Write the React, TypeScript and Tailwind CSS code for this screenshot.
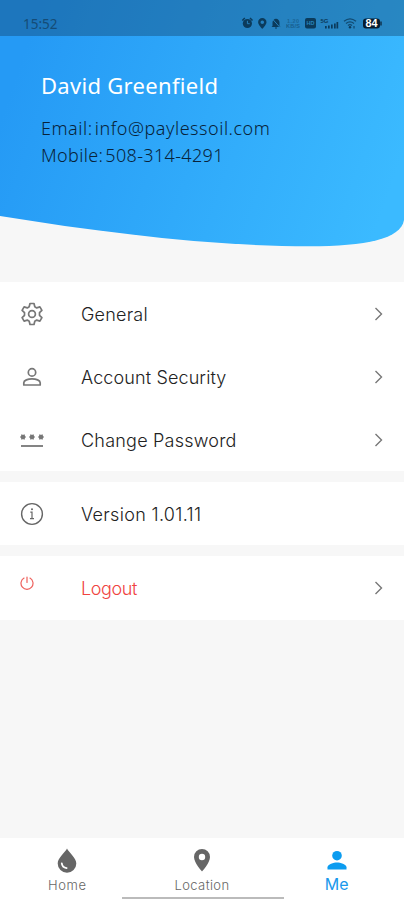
import type { ReactNode } from 'react';

interface MenuItem { label: string; icon: ReactNode; arrow?: boolean; danger?: boolean; textClass: string; }

function GearIcon() {
  return (
    <svg className="w-[24px] h-[24px]" viewBox="0 0 24 24" fill="none" stroke="#777" strokeWidth="1.7" strokeLinejoin="round">
      <path d="M10 1.500h4l.8 3.300 1.900 1.100 3.200-1 2 3.500-2.400 2.300v2.600l2.400 2.300-2 3.500-3.200-1-1.900 1.100-.8 3.300h-4l-.8-3.300-1.900-1.100-3.200 1-2-3.500 2.400-2.300v-2.600L2.100 8.400l2-3.500 3.200 1 1.900-1.100z" />
      <circle cx="12" cy="12" r="3.400" />
    </svg>
  );
}

function PersonIcon() {
  return (
    <svg className="w-[24px] h-[24px]" viewBox="0 0 24 24" fill="none" stroke="#777" strokeWidth="1.7" strokeLinejoin="round">
      <circle cx="12" cy="7.400" r="3.700" />
      <path d="M3.800 20v-2.200c0-2.500 4.200-4 8.200-4s8.200 1.500 8.200 4V20z" />
    </svg>
  );
}

function PasswordIcon() {
  return (
    <svg className="w-[24px] h-[24px]" viewBox="0 0 24 24" stroke="#777" fill="none">
      <path d="M1 18h22" strokeWidth="1.800" />
      {[3, 12, 21].map((x) => (
        <g key={x} transform={`translate(${x} 9)`}>
          <circle r="2.300" fill="#777" stroke="none" />
          <path d="M-2.900 0h5.800M-1.450-2.500l2.900 5M1.450-2.500l-2.900 5" strokeWidth="1.200" />
        </g>
      ))}
    </svg>
  );
}

function InfoIcon() {
  return (
    <svg className="w-[24px] h-[24px]" viewBox="0 0 24 24" fill="none" stroke="#666" strokeWidth="1.4">
      <circle cx="12" cy="12" r="10.400" />
      <path d="M10.300 10.200H12v6.300M10 16.600h4" strokeWidth="1.200" />
      <circle cx="12" cy="7.200" r="1" fill="#666" stroke="none" />
    </svg>
  );
}

function PowerIcon() {
  return (
    <svg className="w-[14px] h-[14px] mb-[10px]" viewBox="0 0 14 14" fill="none" stroke="#ee605c" strokeWidth="1.200" strokeLinecap="round">
      <path d="M7 1v5.500M4 2.100a6 6 0 1 0 6 0" />
    </svg>
  );
}

const groups: MenuItem[][] = [
  [
    { label: 'General', icon: <GearIcon />, arrow: true, textClass: 'tracking-[0.2px]' },
    { label: 'Account Security', icon: <PersonIcon />, arrow: true, textClass: 'tracking-[0.12px]' },
    { label: 'Change Password', icon: <PasswordIcon />, arrow: true, textClass: 'tracking-[0.22px]' },
  ],
  [{ label: 'Version 1.01.11', icon: <InfoIcon />, textClass: 'tracking-[0.32px]' }],
  [{ label: 'Logout', icon: <PowerIcon />, arrow: true, danger: true, textClass: 'tracking-[-0.4px]' }],
];

function MenuRow({ item }: { item: MenuItem }) {
  return (
    <div className="h-[63px] flex items-center pl-5 pr-5">
      <div className="w-[61px] flex-shrink-0">{item.icon}</div>
      <span className={`flex-1 pt-[2px] text-[18px] leading-6 font-light whitespace-nowrap ${item.textClass} ${item.danger ? 'text-[#f0433f]' : 'text-[#222]'}`}>{item.label}</span>
      {item.arrow && (
        <svg className="w-[10px] h-[14px]" viewBox="0 0 10 14" fill="none" stroke="#777" strokeWidth="1.400">
          <path d="M1.500 1l6 6-6 6" />
        </svg>
      )}
    </div>
  );
}

function StatusIcons() {
  return (
    <svg className="w-[142px] h-[14px]" viewBox="241 16 142 14" fill="#0b3b5c">
      <circle cx="247.400" cy="23.500" r="4.600" />
      <path d="M242.300 20.500l2.500-2.500M252.500 20.500l-2.500-2.500" stroke="#0b3b5c" strokeWidth="1.500" />
      <path d="M247.400 20.800v2.900h2.300" stroke="#2481bd" fill="none" />
      <path fillRule="evenodd" d="M262.300 18a4.200 4.200 0 0 1 4.200 4.200c0 2.500-4.200 6.600-4.200 6.600s-4.200-4.100-4.200-6.600a4.200 4.200 0 0 1 4.200-4.200zm0 2.500a1.800 1.800 0 1 0 0 3.600 1.800 1.800 0 0 0 0-3.600z" />
      <path d="M272.500 26v-3.500c0-2 1.500-3.800 3.500-3.800s3.500 1.800 3.500 3.800V26l1 1h-9zM275 27.500h2v1h-2z" />
      <path d="M272 18.500l8.500 9.500" stroke="#2481bd" strokeWidth="1" />
      <g fontFamily="Liberation Sans, sans-serif" fontWeight="bold">
        <text x="287" y="22.500" fontSize="5.500" opacity=".4" textLength="12">1.20</text>
        <text x="286" y="28" fontSize="5.500" opacity=".5" textLength="14">KB/S</text>
        <rect x="305" y="18" width="11" height="10.500" rx="2" />
        <text x="306.500" y="25.300" fontSize="5.500" fill="#2686bf">HD</text>
        <text x="320.500" y="22.500" fontSize="6" textLength="8">5G</text>
      </g>
      <path d="M325 26h1.700v2.500H325zM328 25.500h1.700v3H328zM331 24.500h1.700v4H331zM334 23.500h1.700v5H334zM336.500 22h1.700v6.500h-1.700z" />
      <g fill="none" stroke="#0b3b5c" strokeWidth="1.200" opacity=".8">
        <path d="M344 21.300q6-5 12 0M346 23.400q4-3 8 0M348 25.400q2-1.500 4 0" />
      </g>
      <circle cx="350" cy="27.300" r="1.200" />
      <path d="M354 26v2.500" stroke="#0b3b5c" />
      <rect x="363" y="18.500" width="17" height="10" rx="3" fill="#071d30" />
      <path d="M381 21.500v4" stroke="#071d30" strokeWidth="1.200" />
      <text x="365.500" y="27" fontSize="10" fontWeight="bold" fontFamily="Liberation Sans, sans-serif" fill="#fff" textLength="12" lengthAdjust="spacingAndGlyphs">84</text>
    </svg>
  );
}

function Header() {
  return (
    <header className="relative h-[282px] flex-shrink-0">
      <svg className="absolute inset-0 w-full h-full" viewBox="0 0 404 282" preserveAspectRatio="none">
        <defs>
          <linearGradient id="sky" gradientUnits="userSpaceOnUse" x1="0" y1="120" x2="370" y2="250">
            <stop offset="0" stopColor="#259af5" />
            <stop offset="1" stopColor="#3bbaff" />
          </linearGradient>
        </defs>
        <path fill="url(#sky)" d="M0 0H404V220C401 239 366 246.300 309 246.300C214 246.300 105 233 0 216Z" />
      </svg>
      <div className="relative h-[36px] pl-[23px] pr-[21px] pt-[10px] flex justify-between bg-[#12406a]/40">
        <span className="font-['Noto_Sans'] text-[13.500px] leading-[28px] text-[#154c77]">15:52</span>
        <div className="pt-[6px]"><StatusIcons /></div>
      </div>
      <div className="relative pl-[41px] pt-[33px] font-['Noto_Sans',sans-serif] whitespace-nowrap">
        <h1 className="text-[22px] leading-8 text-white tracking-[0.300px]">David Greenfield</h1>
        <div className="pt-[14px] text-[18px] leading-[27px] font-light [word-spacing:-3px] text-[#08233a]">
          <p className="tracking-[0.520px]">Email: info@paylessoil.com</p>
          <p className="tracking-[0.350px]">Mobile: 508-314-4291</p>
        </div>
      </div>
    </header>
  );
}

function TabBar() {
  return (
    <nav className="h-[62px] flex-shrink-0 bg-white flex flex-col">
      <div className="flex-1 grid grid-cols-3 text-[13px] font-light text-[#666]">
        <div className="flex flex-col items-center pt-[10px]">
          <svg className="w-[20px] h-[25px]" viewBox="0 0 20 25">
            <path d="M10 .5C8.500 4 .7 9.800.7 15.500a9.300 9.300 0 0 0 18.600 0C19.300 9.800 11.500 4 10 .5z" fill="#666" />
            <path d="M4.800 15.300c.2 2.800 2 4.500 4.800 4.900" fill="none" stroke="#fff" strokeWidth="1.800" strokeLinecap="round" />
          </svg>
          <span className="leading-5 pt-[2px] tracking-[0.600px]">Home</span>
        </div>
        <div className="flex flex-col items-center pt-[10px]">
          <svg className="w-[18px] h-[25px]" viewBox="0 0 18 25">
            <path fillRule="evenodd" d="M9 1a8 8 0 0 1 8 8c0 5.800-8 14.500-8 14.500S1 14.800 1 9a8 8 0 0 1 8-8zm0 4.800a3.200 3.200 0 1 0 0 6.400 3.200 3.200 0 0 0 0-6.400z" fill="#666" />
          </svg>
          <span className="leading-5 pt-[2px] tracking-[0.400px]">Location</span>
        </div>
        <div className="flex flex-col items-center pt-[12px] text-[#1a98ec]">
          <svg className="w-[20px] h-[21px]" viewBox="0 0 20 21" fill="#0b9cf0">
            <circle cx="10" cy="5.700" r="4.800" />
            <path d="M.5 19.500v-2.200c0-3.100 6.300-4.800 9.500-4.800s9.500 1.700 9.500 4.800v2.200z" />
          </svg>
          <span className="pt-px text-[16px] leading-6 font-normal">Me</span>
        </div>
      </div>
      <div className="h-[2px] w-[162px] ml-[122px] mb-px bg-[#bbb]" />
    </nav>
  );
}

export default function App() {
  return (
    <div className="w-full h-screen flex flex-col bg-[#f7f7f7] font-['Inter',sans-serif] overflow-hidden">
      <Header />
      <main className="flex-1 flex flex-col gap-[11px]">
        {groups.map((group) => (
          <section key={group[0].label} className="bg-white last:pb-px">
            {group.map((item) => <MenuRow key={item.label} item={item} />)}
          </section>
        ))}
      </main>
      <TabBar />
    </div>
  );
}
